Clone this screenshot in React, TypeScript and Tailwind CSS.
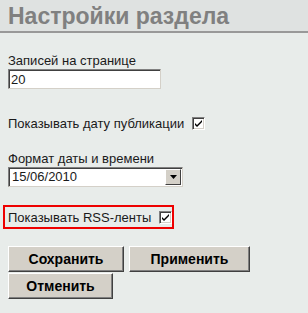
import React from "react";

function Check() {
    return (
        <span className="inline-flex items-center justify-center w-[13px] h-[13px] bg-white border border-t-[#808080] border-l-[#808080] border-b-white border-r-white shadow-[inset_1px_1px_0_#404040,inset_-1px_-1px_0_#d4d0c8]">
            <svg width="9" height="9" viewBox="0 0 9 9">
                <path d="M1 4 L3 6 L8 1 L8 3 L3 8 L1 6 Z" fill="#000" />
            </svg>
        </span>
    );
}

function Btn({ children, w }: { children: React.ReactNode; w: string }) {
    return (
        <button className={`${w} h-[26px] bg-[#d4d0c8] text-black font-bold text-[14px] border border-t-white border-l-white border-b-[#404040] border-r-[#404040] shadow-[inset_-1px_-1px_0_#808080]`}>
            {children}
        </button>
    );
}

export default function App() {
    return (
        <div className="w-[308px] h-[313px] bg-[#e8ecea] font-['Liberation_Sans',sans-serif] text-[13px] text-[#1a1a1a]">
            <div className="h-[33px] bg-[#dfe2e1] border-b-2 border-[#999] px-2 pt-[5px]">
                <h1 className="font-bold text-[23px] leading-none text-[#808080]">Настройки раздела</h1>
            </div>

            <div className="px-2 pt-[20px]">
                <div className="leading-[15px]">Записей на странице</div>
                <input
                    defaultValue="20"
                    className="block w-[153px] h-[20px] mt-[1px] bg-white px-[2px] text-[13px] border border-t-[#808080] border-l-[#808080] border-b-[#d4d0c8] border-r-[#d4d0c8] shadow-[inset_1px_1px_0_#404040]"
                />

                <div className="flex items-center gap-[8px] mt-[27px] leading-[15px]">
                    <span>Показывать дату публикации</span>
                    <Check />
                </div>

                <div className="mt-[20px] leading-[15px]">Формат даты и времени</div>
                <div className="flex w-[175px] h-[20px] mt-[1px] bg-white border border-t-[#808080] border-l-[#808080] border-b-[#d4d0c8] border-r-[#d4d0c8] shadow-[inset_1px_1px_0_#404040]">
                    <span className="flex-1 pl-[3px] text-[13px] leading-[17px]">15/06/2010</span>
                    <span className="w-[16px] h-[16px] mt-[1px] mr-[1px] bg-[#d4d0c8] flex items-center justify-center border border-t-white border-l-white border-b-[#404040] border-r-[#404040]">
                        <svg width="7" height="4" viewBox="0 0 7 4">
                            <path d="M0 0 H7 L3.5 4 Z" fill="#000" />
                        </svg>
                    </span>
                </div>
            </div>

            <div className="mx-[3px] mt-[18px] w-[171px] h-[24px] border-2 border-[#ee0000] flex items-center gap-[8px] pl-[3px] whitespace-nowrap">
                <span className="leading-[15px]">Показывать RSS-ленты</span>
                <Check />
            </div>

            <div className="px-2 pt-[17px] flex flex-wrap gap-x-[5px] gap-y-[1px] w-[260px]">
                <Btn w="w-[116px]">Сохранить</Btn>
                <Btn w="w-[121px]">Применить</Btn>
                <Btn w="w-[105px]">Отменить</Btn>
            </div>
        </div>
    );
}
